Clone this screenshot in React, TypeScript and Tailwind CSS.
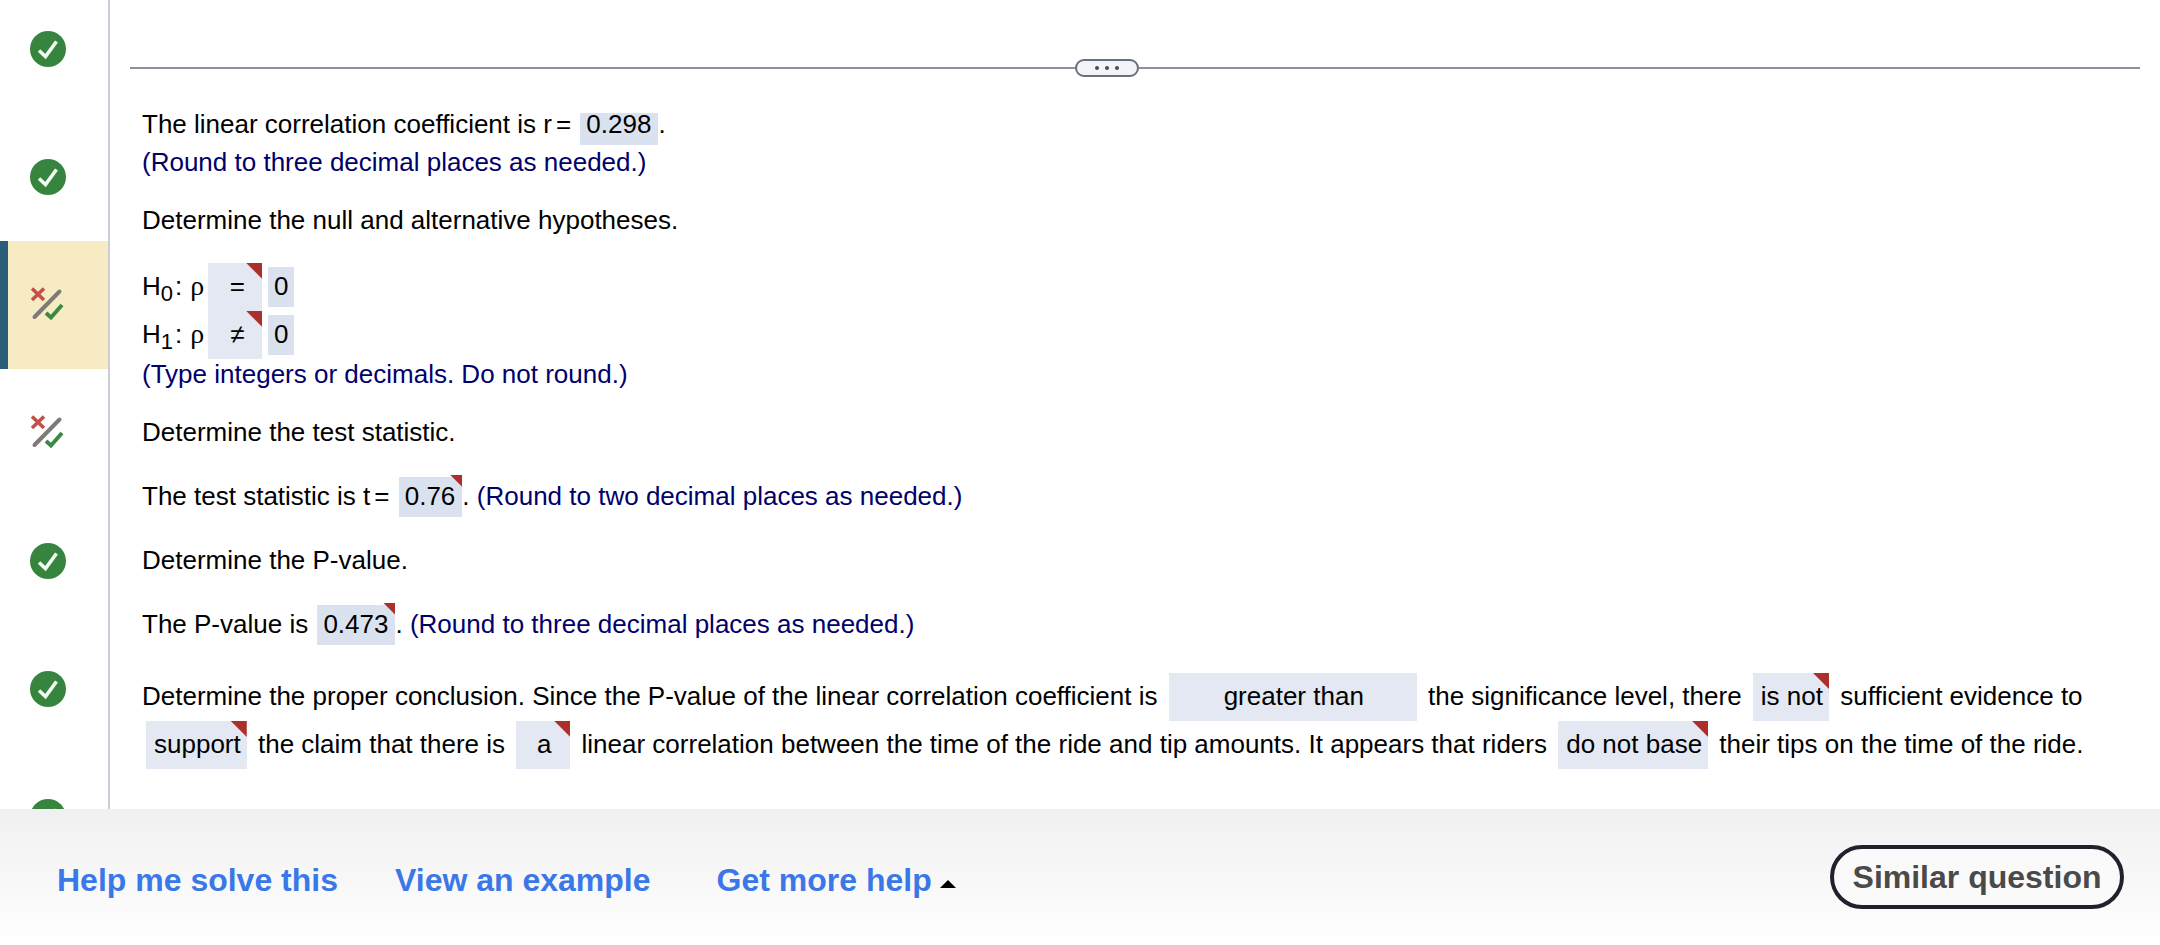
import type { ReactNode } from "react";

type Status = "correct" | "partial";

const steps: { status: Status; current?: boolean }[] = [
  { status: "correct" },
  { status: "correct" },
  { status: "partial", current: true },
  { status: "partial" },
  { status: "correct" },
  { status: "correct" },
  { status: "correct" },
];

function CorrectIcon() {
  return (
    <svg viewBox="0 0 36 36" className="size-9" aria-hidden="true">
      <circle cx="18" cy="18" r="18" fill="#37843f" />
      <path d="M9 19.5 L15.5 25.5 L26.5 10.5" fill="none" stroke="#f4fbf2" strokeWidth="3.6" />
    </svg>
  );
}

function PartialIcon() {
  return (
    <svg viewBox="0 0 36 36" className="size-9" aria-hidden="true">
      <path d="M2 1.5 L14 13 M14 1.5 L2 13" fill="none" stroke="#c4504c" strokeWidth="3.6" />
      <path d="M4.5 30 L29.5 4.5" fill="none" stroke="#7d7a78" strokeWidth="4" strokeLinecap="round" />
      <path d="M16 26 L21 30.500 L32 18" fill="none" stroke="#3a8a44" strokeWidth="4" />
    </svg>
  );
}

function Corner({ small }: { small?: boolean }) {
  return (
    <span
      className={
        small
          ? "absolute right-0 -top-0.5 size-3 bg-[#ad2f2c] [clip-path:polygon(0_0,100%_0,100%_100%)]"
          : "absolute right-0 top-0 size-4 bg-[#ad2f2c] [clip-path:polygon(0_0,100%_0,100%_100%)]"
      }
    />
  );
}

function Typed({ children, wrong }: { children: ReactNode; wrong?: boolean }) {
  return (
    <span className="relative ml-0.5 inline-block bg-[#dbe2ef] pb-0.5 pl-1.5 pr-[7px] leading-[38px]">
      {children}
      {wrong && <Corner small />}
    </span>
  );
}

function Chosen({ children, wrong, className }: { children: ReactNode; wrong?: boolean; className: string }) {
  return (
    <span className={`relative inline-block bg-[#e3e8f2] pb-0.5 text-center leading-[46px] ${className}`}>
      {children}
      {wrong && <Corner />}
    </span>
  );
}

function Hypothesis({ index, relation }: { index: number; relation: string }) {
  return (
    <p className="flex h-12 leading-[46px]">
      <span>H</span>
      <span className="relative top-2 text-[22px]">{index}</span>
      <span className="ml-0.5">:</span>
      <span className="ml-2 w-4 font-['Liberation_Serif',serif] text-[28px]">ρ</span>
      <Chosen wrong className="ml-0.5 w-[54px] pl-1">
        {relation}
      </Chosen>
      <span className="my-1 ml-1.5 w-[26px] bg-[#dbe2ef] text-center leading-[38px]">0</span>
    </p>
  );
}

function Hint({ children }: { children: ReactNode }) {
  return <span className="text-[#00006b]">{children}</span>;
}

export default function App() {
  return (
    <div className="flex h-screen flex-col overflow-hidden bg-white font-['Liberation_Sans',Arial,sans-serif] text-[26px] text-black">
      <div className="flex min-h-0 flex-1 overflow-hidden">
        <nav aria-label="Question parts" className="w-[110px] shrink-0 overflow-hidden border-r-2 border-[#cbcdd9]">
          <ol className="-mt-[15px]">
            {steps.map((step, i) => (
              <li key={i}>
                <button
                  type="button"
                  aria-label={`Part ${i + 1}, ${step.status}`}
                  aria-current={step.current ? "step" : undefined}
                  className={
                    step.current
                      ? "flex h-32 w-full items-center border-l-8 border-[#285e78] bg-[#f7ebc3] pl-[22px]"
                      : "flex h-32 w-full items-center pl-[30px]"
                  }
                >
                  {step.status === "correct" ? <CorrectIcon /> : <PartialIcon />}
                </button>
              </li>
            ))}
          </ol>
        </nav>

        <main className="min-w-0 flex-1 px-5 pt-[59px]">
          <div className="flex items-center">
            <hr className="flex-1 border-t-2 border-[#8e8e9f]" />
            <button
              type="button"
              aria-label="Resize panel"
              className="flex h-[18px] w-16 items-center justify-center gap-1.5 rounded-full border-2 border-[#69707d] bg-[#f2f4f9]"
            >
              <span className="size-1 rounded-full bg-[#4a4a4f]" />
              <span className="size-1 rounded-full bg-[#4a4a4f]" />
              <span className="size-1 rounded-full bg-[#4a4a4f]" />
            </button>
            <hr className="flex-1 border-t-2 border-[#8e8e9f]" />
            <hr className="w-14 border-t-2 border-[#8e8e9f]" />
          </div>

          <div className="pl-3 pt-7 leading-[30px]">
            <p className="leading-[38px]">
              The linear correlation coefficient is r<span className="ml-1">=</span>{" "}
              <span className="ml-0.5 inline-block bg-[linear-gradient(transparent_8px,#dbe2ef_8px)] pb-0.5 pl-1.5 pr-[7px]">
                0.298
              </span>
              .
            </p>
            <p className="mt-0.5 pb-0.5">
              <Hint>(Round to three decimal places as needed.)</Hint>
            </p>
            <p className="mt-[26px] pb-0.5">Determine the null and alternative hypotheses.</p>
            <div className="mt-[26px]">
              <Hypothesis index={0} relation="=" />
              <Hypothesis index={1} relation="≠" />
            </div>
            <p className="pb-0.5">
              <Hint>(Type integers or decimals. Do not round.)</Hint>
            </p>
            <p className="mt-[26px] pb-0.5">Determine the test statistic.</p>
            <p className="mt-7 leading-[38px]">
              The test statistic is t<span className="ml-1">=</span> <Typed wrong>0.76</Typed>.{" "}
              <Hint>(Round to two decimal places as needed.)</Hint>
            </p>
            <p className="mt-7 pb-0.5">Determine the P-value.</p>
            <p className="mt-7 leading-[38px]">
              The P-value is <Typed wrong>0.473</Typed>. <Hint>(Round to three decimal places as needed.)</Hint>
            </p>
            <p className="mt-7 leading-[46px]">
              Determine the proper conclusion. Since the P-value of the linear correlation coefficient is{" "}
              <Chosen className="mx-1 w-[248px] pl-0.5">greater than</Chosen> the significance level, there{" "}
              <Chosen wrong className="mx-1 pl-2 pr-1.5">is not</Chosen> sufficient evidence to{" "}
              <Chosen wrong className="mx-1 pl-2 pr-1.5">support</Chosen> the claim that there is{" "}
              <Chosen wrong className="mx-1 w-[54px] pl-0.5">a</Chosen> linear correlation between the time of the ride
              and tip amounts. It appears that riders{" "}
              <Chosen wrong className="mx-1 pl-2 pr-1.5">do not base</Chosen> their tips on the time of the ride.
            </p>
          </div>
        </main>
      </div>

      <footer className="flex h-[136px] shrink-0 items-center justify-between bg-linear-to-b from-[#f0f0f0] to-white pl-[57px] pr-9 text-[32px] font-bold">
        <div className="flex items-center pt-1.5 leading-9 text-[#3b78e7]">
          <a href="#solve">Help me solve this</a>
          <a href="#example" className="ml-[57px]">View an example</a>
          <button type="button" className="ml-[66px] flex items-center gap-2">
            Get more help
            <svg viewBox="0 0 16 8" className="mt-2 h-2 w-4" aria-hidden="true">
              <path d="M0 8 L8 0 L16 8 Z" fill="#000" />
            </svg>
          </button>
        </div>
        <button
          type="button"
          className="h-16 w-[294px] rounded-full border-4 border-[#1f222d] bg-[#fafafa] text-center leading-9 text-[#4a4a4a]"
        >
          Similar question
        </button>
      </footer>
    </div>
  );
}
